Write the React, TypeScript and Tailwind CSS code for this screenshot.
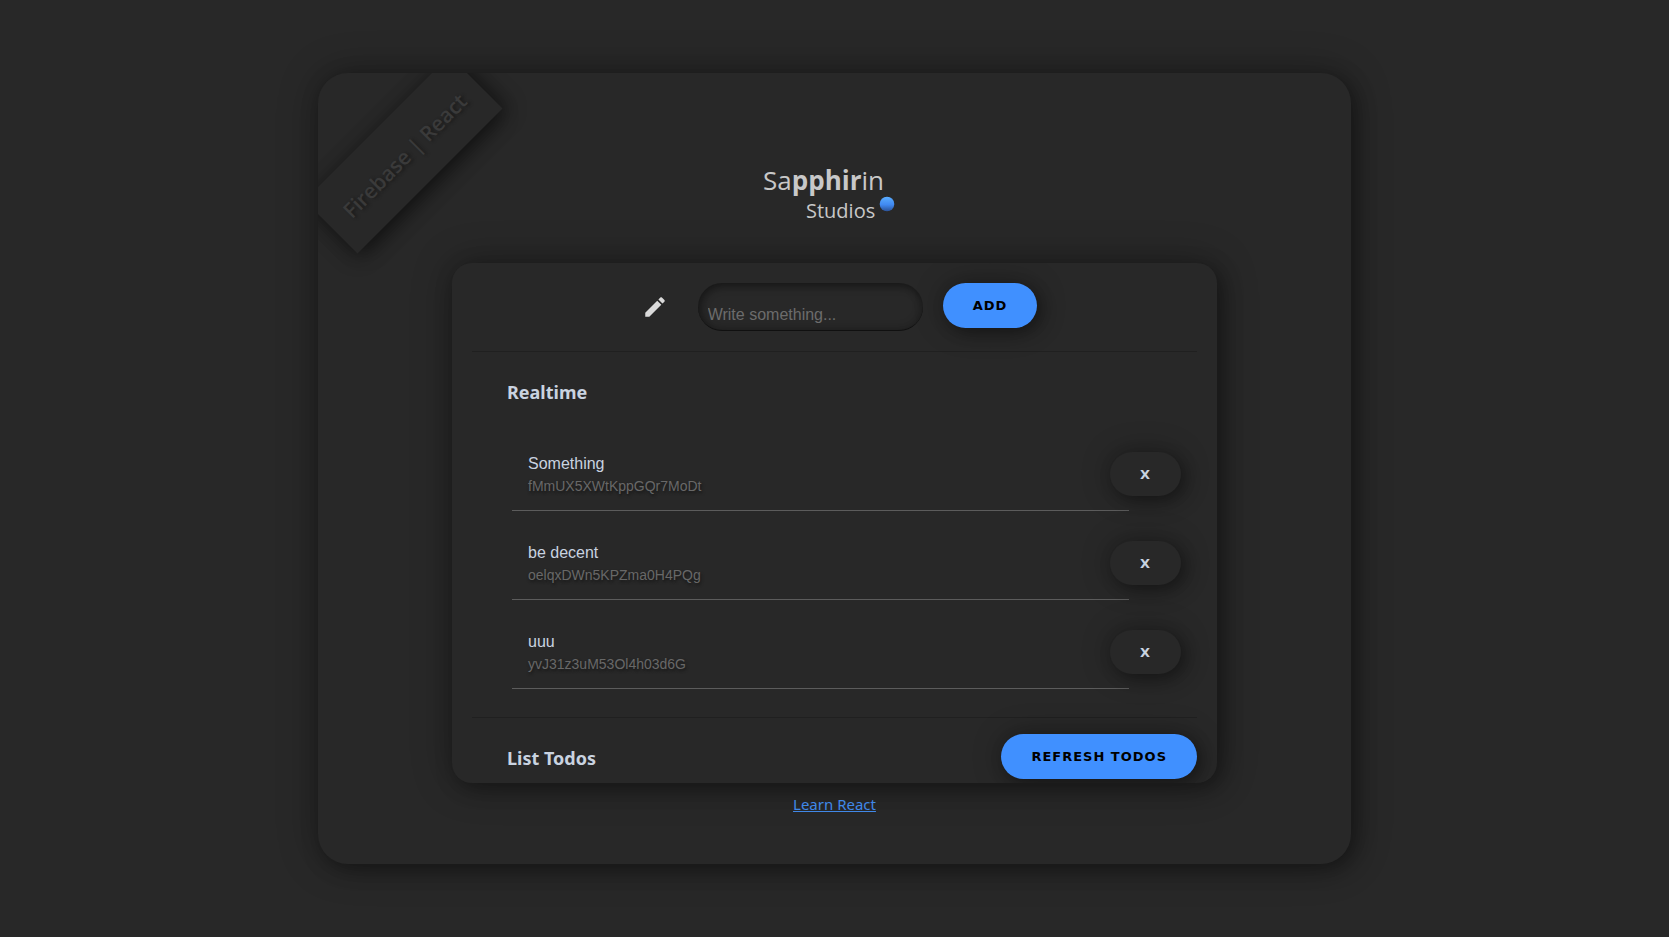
import { useState } from "react";

type Todo = { id: string; text: string };

const initialTodos: Todo[] = [
  { id: "fMmUX5XWtKppGQr7MoDt", text: "Something" },
  { id: "oelqxDWn5KPZma0H4PQg", text: "be decent" },
  { id: "yvJ31z3uM53Ol4h03d6G", text: "uuu" },
];

function Ribbon() {
  return (
    <div className="absolute top-[44px] -left-[17px] flex h-[75px] w-[205px] -rotate-45 items-center justify-center bg-[#282828] pt-1 font-['Open_Sans',sans-serif] text-[21px] font-semibold text-[#3a3a3a] shadow-[5px_5px_20px_rgba(0,0,0,0.4),-5px_5px_20px_rgba(0,0,0,0.3)] [text-shadow:2px_2px_3px_#1c1c1c]">
      Firebase | React
    </div>
  );
}

function Logo() {
  return (
    <svg className="h-[66px] w-[144px]" viewBox="-2 0 144 66" role="img" aria-label="Sapphirin Studios">
      <defs>
        <linearGradient id="gem" x1="0" y1="0" x2="0" y2="1">
          <stop offset="0" stopColor="#5aadff" />
          <stop offset="0.55" stopColor="#4089f2" />
          <stop offset="1" stopColor="#2b5297" />
        </linearGradient>
      </defs>
      <text x="-2" y="30" fontSize="26" fill="#c8c8c8" fontFamily="'Open Sans', sans-serif">
        <tspan fontWeight="400">Sa</tspan>
        <tspan fontWeight="700">pphir</tspan>
        <tspan fontWeight="400">in</tspan>
      </text>
      <text x="41" y="58" fontSize="20" fill="#c8c8c8" fontFamily="'Open Sans', sans-serif" fontWeight="400">
        Studios
      </text>
      <circle cx="122" cy="44" r="7.3" fill="url(#gem)" />
    </svg>
  );
}

const pill =
  "cursor-pointer rounded-full font-['DejaVu_Sans',sans-serif] text-[13px] font-bold leading-[17px] tracking-[1px] shadow-[5px_5px_15px_rgba(0,0,0,0.3),0_0_30px_rgba(0,0,0,0.3)]";

export default function App() {
  const [todos, setTodos] = useState(initialTodos);
  const [draft, setDraft] = useState("");

  return (
    <div className="flex min-h-screen items-center justify-center bg-[#282828] font-['Noto_Sans',sans-serif] text-[#c9d3e0]">
      <main className="relative flex w-full max-w-[1033px] flex-col items-center overflow-hidden rounded-[30px] bg-[#282828] px-4 pt-[87px] pb-[48px] shadow-[5px_5px_20px_rgba(0,0,0,0.35),0_0_40px_rgba(0,0,0,0.3)]">
        <Ribbon />
        <Logo />
        <section className="mt-[37px] w-full max-w-[765px] overflow-hidden rounded-[20px] bg-[#282828] px-5 pb-1 shadow-[5px_5px_20px_rgba(0,0,0,0.35),0_0_40px_rgba(0,0,0,0.3)]">
          <form
            className="flex items-start justify-center border-b border-[#202020] py-5 pl-[10px]"
            onSubmit={(e) => {
              e.preventDefault();
              if (draft) setTodos([...todos, { id: String(Date.now()), text: draft }]);
              setDraft("");
            }}
          >
            <label htmlFor="todo" aria-label="New todo" className="mt-[11px] mr-[30px]">
              <svg className="size-[26px]" viewBox="0 0 24 24" fill="#dadada" aria-hidden="true">
                <path d="M3 17.25V21h3.75L17.81 9.94l-3.75-3.75L3 17.25zM20.71 7.04c.39-.39.39-1.02 0-1.41l-2.34-2.34c-.39-.39-1.02-.39-1.41 0l-1.83 1.83 3.75 3.75 1.83-1.83z" />
              </svg>
            </label>
            <input
              id="todo"
              value={draft}
              onChange={(e) => setDraft(e.target.value)}
              placeholder="Write something..."
              className="mr-5 h-12 w-[225px] rounded-[24px] border-b border-[#101010] bg-transparent px-[10px] pt-4 font-['Liberation_Sans',Arial,sans-serif] text-[16px] shadow-[inset_2px_3px_8px_rgba(0,0,0,0.4),inset_-1px_-1px_10px_rgba(0,0,0,0.15)] outline-none placeholder:text-[#6c6c6c]"
            />
            <button type="submit" className={`${pill} bg-[#4090ff] px-[30px] py-[14px] text-black`}>
              ADD
            </button>
          </form>

          <div className="border-b border-[#202020] pt-[26px] pb-7 pl-[35px]">
            <h2 className="text-[18px] leading-7 font-bold">Realtime</h2>
            <ul className="mt-[16px] pl-[5px]">
              {todos.map((t) => (
                <li key={t.id} className="flex pt-[13px]">
                  <div className="mr-[-19px] flex-1 border-b border-[#5c5c5c] px-4 pt-[19px] pb-[14px] font-['Liberation_Sans',Arial,sans-serif]">
                    <p className="text-[16px] leading-5">{t.text}</p>
                    <p className="pt-[2px] text-[14px] leading-5 text-[#686868] [text-shadow:1px_2px_3px_#161616]">{t.id}</p>
                  </div>
                  <button
                    type="button"
                    aria-label={`Delete ${t.text}`}
                    onClick={() => setTodos(todos.filter((o) => o.id !== t.id))}
                    className={`${pill} mt-[17px] mr-4 h-11 w-[71px] bg-[#282828] text-[#c9d3e0]`}
                  >
                    X
                  </button>
                </li>
              ))}
            </ul>
          </div>

          <div className="flex items-start justify-between pt-4 pl-[35px]">
            <h2 className="mt-[10px] text-[18px] leading-7 font-bold">List Todos</h2>
            <button type="button" className={`${pill} bg-[#4090ff] px-[30px] py-[14px] text-black`}>
              REFRESH TODOS
            </button>
          </div>
        </section>
        <a href="https://reactjs.org" className="mt-[9px] text-[15px] leading-6 text-[#4088e8] underline">
          Learn React
        </a>
      </main>
    </div>
  );
}
